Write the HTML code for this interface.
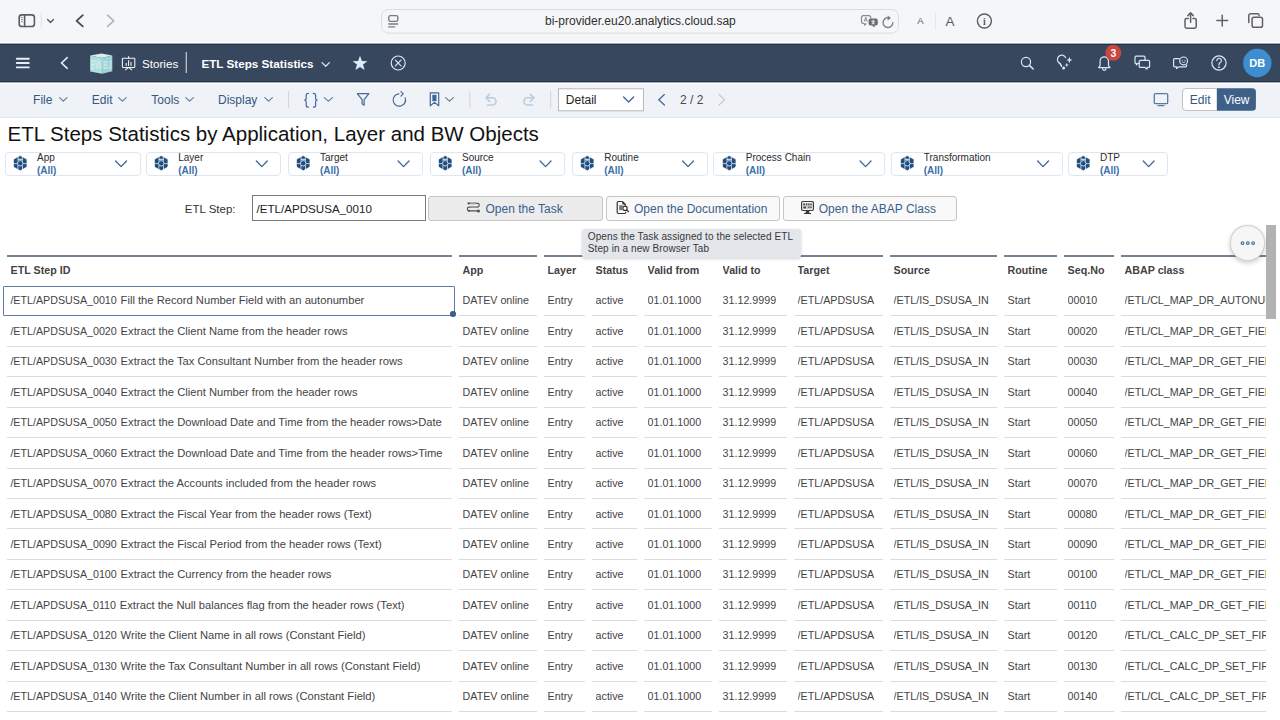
<!DOCTYPE html>
<html><head><meta charset="utf-8">
<style>
*{box-sizing:border-box;margin:0;padding:0}
html,body{width:1280px;height:720px;overflow:hidden;background:#fff;font-family:"Liberation Sans",sans-serif;position:relative}
.a{position:absolute}
.t{position:absolute;line-height:1;white-space:nowrap}
svg{position:absolute;overflow:visible}
/* table */
.hl{position:absolute;top:255.1px;height:1.6px;background:#748293}
.ht{position:absolute;top:264.9px;font-size:10.7px;line-height:1;font-weight:bold;color:#424242;white-space:nowrap;overflow:hidden}
.rl{position:absolute;height:1px;background:#dcdcdc}
.rt{position:absolute;font-size:10.7px;line-height:21px;height:21px;color:#444;white-space:nowrap;overflow:hidden}
.fb{position:absolute;top:152px;height:23.6px;border:1px solid #dde7f2;border-radius:4px;background:#fff}
.fl{position:absolute;top:0.2px;left:31.5px;font-size:10px;line-height:1;color:#2b2b2b;white-space:nowrap}
.fv{position:absolute;top:13.3px;left:31.5px;font-size:10px;line-height:1;font-weight:bold;color:#3c6ea8;white-space:nowrap}
.btn{position:absolute;top:195.5px;height:25.5px;width:174px;border:1px solid #c6c6c6;border-radius:3px;background:#f9f9f9}
.bt{position:absolute;top:6.1px;font-size:12px;line-height:1;color:#3a5f8c;white-space:nowrap}
</style></head><body>

<!-- browser chrome -->
<div class="a" style="left:0;top:0;width:1280px;height:42px;background:#f5f6f8"></div>
<div class="a" style="left:0;top:42px;width:1280px;height:1px;background:#fcfcfd"></div>
<div class="a" style="left:0;top:43px;width:1280px;height:1px;background:#a3aab4"></div>
<div class="a" style="left:0;top:44px;width:1280px;height:1px;background:#233249"></div>

<svg style="left:0;top:0" width="1280" height="42">
 <g fill="none" stroke="#5c5c5e" stroke-width="1.6" stroke-linecap="round" stroke-linejoin="round">
  <rect x="19.2" y="14.9" width="15.2" height="11.6" rx="2.6"/>
  <line x1="24.6" y1="15" x2="24.6" y2="26.4"/>
  <line x1="21.2" y1="17.5" x2="22.6" y2="17.5" stroke-width="0.9" stroke-linecap="butt"/>
  <line x1="21.2" y1="19.6" x2="22.6" y2="19.6" stroke-width="0.9" stroke-linecap="butt"/>
  <line x1="21.2" y1="21.7" x2="22.6" y2="21.7" stroke-width="0.9" stroke-linecap="butt"/>
  <polyline points="47.6,19.6 50.5,22.5 53.4,19.6" stroke-width="1.4"/>
  <polyline points="82.8,15.2 76.6,20.8 82.8,26.4" stroke-width="1.8" stroke="#4a4a4c"/>
  <polyline points="107.6,15.2 113.8,20.8 107.6,26.4" stroke-width="1.6" stroke="#b4b4b6"/>
 </g>
 <line x1="41.3" y1="13" x2="41.3" y2="29" stroke="#e3e3e6" stroke-width="1"/>
 <rect x="381.5" y="9.5" width="517" height="23.6" rx="7" fill="#f5f6f8" stroke="#dcdcdf" stroke-width="1"/>
 <g fill="none" stroke="#7a7a7c" stroke-width="1.4" stroke-linecap="round">
  <rect x="388.8" y="15.6" width="9" height="5.8" rx="1.6"/>
  <line x1="388.8" y1="24" x2="397.6" y2="24"/>
  <line x1="388.8" y1="26.9" x2="394.6" y2="26.9"/>
 </g>
 <!-- translate -->
 <path d="M863.4 15.7 h5.4 a1.9 1.9 0 0 1 1.9 1.9 v0.9 M864.4 23.5 h-1 a1.9 1.9 0 0 1 -1.9 -1.9 v-4 a1.9 1.9 0 0 1 1.9 -1.9 M864.4 23.5 l0.2 1.6 l1.8 -1.6" fill="none" stroke="#8a8a8c" stroke-width="1.2" stroke-linejoin="round"/>
 <path d="M864.2 21.6 l1.6 -4.4 l1.6 4.4 M864.8 20.2 h2" fill="none" stroke="#8a8a8c" stroke-width="0.9"/>
 <path d="M870.6 18.6 h5.2 a2 2 0 0 1 2 2 v3 a2 2 0 0 1 -2 2 h-1 l-0.6 2 l-2 -2 h-1.6 a2 2 0 0 1 -2 -2 v-3 a2 2 0 0 1 2 -2z" fill="#6a6a6c"/>
 <path d="M873.2 19.8 v4.8 M871.2 21.2 h4 M871.8 24.2 l1.4 -2 l1.4 2" fill="none" stroke="#e8e8ea" stroke-width="1"/>
 <path d="M892.9 22.6 A4.9 4.9 0 1 1 888.2 17.7" fill="none" stroke="#7a7a7c" stroke-width="1.3" stroke-linecap="round"/>
 <polygon points="887.6,15.4 891,18 887.6,20.6" fill="#7a7a7c"/>
 <text x="920.4" y="24" font-size="9.5" fill="#5a5a5c" text-anchor="middle" font-family="Liberation Sans">A</text>
 <line x1="935.6" y1="13" x2="935.6" y2="30" stroke="#e4e4e7" stroke-width="1"/>
 <text x="949.9" y="25.9" font-size="13.5" fill="#5a5a5c" text-anchor="middle" font-family="Liberation Sans">A</text>
 <circle cx="984.4" cy="21" r="7" fill="none" stroke="#5c5c5e" stroke-width="1.4"/>
 <text x="984.4" y="25.2" font-size="10" font-weight="bold" fill="#5c5c5e" text-anchor="middle" font-family="Liberation Serif">i</text>
 <g fill="none" stroke="#616163" stroke-width="1.5" stroke-linecap="round" stroke-linejoin="round">
  <path d="M1188.2 18.4 h-1.6 a1.6 1.6 0 0 0 -1.6 1.6 v6.6 a1.6 1.6 0 0 0 1.6 1.6 h8 a1.6 1.6 0 0 0 1.6 -1.6 v-6.6 a1.6 1.6 0 0 0 -1.6 -1.6 h-1.6"/>
  <line x1="1190.6" y1="13.2" x2="1190.6" y2="22.2"/>
  <polyline points="1187.9,15.6 1190.6,12.9 1193.3,15.6"/>
  <line x1="1216.9" y1="20.6" x2="1227.6" y2="20.6"/>
  <line x1="1222.25" y1="15.3" x2="1222.25" y2="26"/>
  <path d="M1248.8 22.6 v-7 a1.8 1.8 0 0 1 1.8 -1.8 h6.8 a1.8 1.8 0 0 1 1.8 1.6"/>
  <rect x="1252.1" y="17.3" width="10.4" height="10" rx="1.8"/>
 </g>
</svg>
<div class="t" style="left:545px;top:15.3px;font-size:12px;color:#2f2f31">bi-provider.eu20.analytics.cloud.sap</div>

<!-- shell bar -->
<div class="a" style="left:0;top:45px;width:1280px;height:36px;background:#37475e"></div>
<div class="a" style="left:0;top:81px;width:1280px;height:1px;background:#28364d"></div>
<div class="a" style="left:0;top:82px;width:1280px;height:1px;background:#a4abb6"></div>
<div class="a" style="left:0;top:83px;width:1280px;height:1px;background:#ffffff"></div>

<svg style="left:0;top:44px" width="1280" height="38">
 <g stroke="#e4eef8" stroke-width="1.9" stroke-linecap="round" fill="none">
  <line x1="16.8" y1="14.75" x2="28.8" y2="14.75"/>
  <line x1="16.8" y1="19" x2="28.8" y2="19"/>
  <line x1="16.8" y1="23.4" x2="28.8" y2="23.4"/>
  <polyline points="67.2,13.7 61.6,19 67.2,24.3" stroke-width="1.6"/>
 </g>
 <!-- cube -->
 <polygon points="90.2,11.6 101.5,9.6 112.3,11.6 101.8,14" fill="#d6eef0"/>
 <polygon points="90.2,11.6 101.8,14 102.2,29.8 90.2,27.4" fill="#a9e1df"/>
 <polygon points="101.8,14 112.3,11.6 112.3,27.2 102.2,29.8" fill="#9dd5da"/>
 <text x="0" y="0" font-size="13" fill="#f3ecf1" text-anchor="middle" font-family="Liberation Sans" opacity="0.85" transform="translate(95.8 25.2) scale(0.5 1)">BW</text>
 <text x="0" y="0" font-size="12.5" fill="#f3ecf1" text-anchor="middle" font-family="Liberation Serif" opacity="0.85" transform="translate(107.3 24.8) scale(0.55 1)">B.I</text>
 <!-- presentation -->
 <g stroke="#f2f5f8" stroke-width="1.05" fill="none" stroke-linecap="round">
  <rect x="122.4" y="14.2" width="12.4" height="9.2" rx="0.6"/>
  <line x1="128.6" y1="12.4" x2="128.6" y2="14.2"/>
  <line x1="126.2" y1="19.4" x2="126.2" y2="21.4"/>
  <line x1="128.6" y1="16.6" x2="128.6" y2="21.4"/>
  <line x1="131" y1="18.4" x2="131" y2="21.4"/>
  <polyline points="125.4,25.8 128.6,23.4 131.8,25.8"/>
 </g>
 <line x1="186.3" y1="8" x2="186.3" y2="29" stroke="#c7cdd6" stroke-width="1.2"/>
 <polyline points="322,18.6 325.7,22.2 329.4,18.6" fill="none" stroke="#d8e6f4" stroke-width="1.3" stroke-linecap="round" stroke-linejoin="round"/>
 <polygon points="360,11.8 361.9,17.1 367.4,17.2 363,20.6 364.6,26.1 360,22.9 355.4,26.1 357,20.6 352.6,17.2 358.1,17.1" fill="#dcebfa"/>
 <circle cx="398.2" cy="19" r="7" fill="none" stroke="#dfe9f5" stroke-width="1.2"/>
 <g stroke="#dfe9f5" stroke-width="1.2" stroke-linecap="round"><line x1="395.4" y1="16.2" x2="401" y2="21.8"/><line x1="401" y1="16.2" x2="395.4" y2="21.8"/></g>
 <!-- right icons -->
 <g fill="none" stroke="#dce7f3" stroke-width="1.2" stroke-linecap="round" stroke-linejoin="round">
  <circle cx="1026" cy="18" r="4.6"/>
  <line x1="1029.4" y1="21.4" x2="1033.2" y2="25" stroke-width="1.6"/>
  <!-- bulb -->
  <path d="M1065.6 13.6 a4.3 4.3 0 1 0 -5.6 5.8 l1.6 2.6 M1064 15.2"/>
  <path d="M1060 19.4 l1.4 2.8"/>
  <!-- bell -->
  <path d="M1098.6 23.6 h11.4 l-1.5 -2 v-4.6 a4.2 4.2 0 0 0 -8.4 0 v4.6z"/>
  <path d="M1102.6 24.6 a1.7 1.7 0 0 0 3.4 0"/>
  <!-- chat -->
  <path d="M1136 12.2 h8 a1 1 0 0 1 1 1 v3 M1139.2 19.4 h-1.2 l-1.6 1.4 v-1.4 h-0.4 a1 1 0 0 1 -1 -1 v-5.2 a1 1 0 0 1 1 -1"/>
  <path d="M1140.2 16.4 h8.4 a1 1 0 0 1 1 1 v5 a1 1 0 0 1 -1 1 h-1.6 l0 1.8 l-2.2 -1.8 h-4.6 a1 1 0 0 1 -1 -1 v-5 a1 1 0 0 1 1 -1z"/>
  <!-- feedback -->
  <path d="M1179.2 14.6 h-4.6 a1 1 0 0 0 -1 1 v6.2 a1 1 0 0 0 1 1 h2 v1.8 l2.2 -1.8 h6.8 a1 1 0 0 0 1 -1 v-1"/>
  <circle cx="1183.6" cy="16.9" r="3.9"/>
  <circle cx="1219" cy="19" r="7.1"/>
  <path d="M1216.8 16.6 a2.3 2.3 0 1 1 3.2 2.1 q-1 0.5 -1 1.6 v0.6"/>
 </g>
 <g fill="#dce7f3">
  <polygon points="1069.4,12.8 1070.3,15.2 1072.6,16 1070.3,16.8 1069.4,19.2 1068.5,16.8 1066.2,16 1068.5,15.2"/>
  <polygon points="1066.8,18.8 1067.4,20.4 1069,21 1067.4,21.6 1066.8,23.2 1066.2,21.6 1064.6,21 1066.2,20.4"/>
  <circle cx="1063.6" cy="24" r="1.5"/>
  <circle cx="1219" cy="23.2" r="0.9"/>
  <circle cx="1182.3" cy="16.2" r="0.55"/><circle cx="1184.9" cy="16.2" r="0.55"/>
 </g>
 <path d="M1181.9 17.8 q1.7 1.5 3.4 0" fill="none" stroke="#dce7f3" stroke-width="0.8"/>
 <circle cx="1113.3" cy="8.8" r="8" fill="#c9473f"/>
 <text x="1113.3" y="12.5" font-size="10.5" font-weight="bold" fill="#fff" text-anchor="middle" font-family="Liberation Sans">3</text>
 <circle cx="1257.3" cy="19" r="14.2" fill="#3e8dd0"/>
 <text x="1257.3" y="23" font-size="11" font-weight="bold" fill="#fff" text-anchor="middle" font-family="Liberation Sans">DB</text>
</svg>
<div class="t" style="left:141.9px;top:58px;font-size:11.7px;color:#fff">Stories</div>
<div class="t" style="left:201.4px;top:58px;font-size:11.7px;font-weight:bold;color:#fff">ETL Steps Statistics</div>

<!-- toolbar -->
<div class="a" style="left:0;top:84px;width:1280px;height:33px;background:#eff2f7"></div>
<div class="a" style="left:0;top:117px;width:1280px;height:1px;background:#dfe5f1"></div>
<div class="t" style="left:33.1px;top:93.9px;font-size:12px;color:#35577f">File</div>
<div class="t" style="left:91.8px;top:93.9px;font-size:12px;color:#35577f">Edit</div>
<div class="t" style="left:151.3px;top:93.9px;font-size:12px;color:#35577f">Tools</div>
<div class="t" style="left:218px;top:93.9px;font-size:12px;color:#35577f">Display</div>
<svg style="left:0;top:84px" width="1280" height="33">
 <g fill="none" stroke="#5d7a9e" stroke-width="1.1" stroke-linecap="round" stroke-linejoin="round">
  <polyline points="59.6,13.6 63.3,17.2 67,13.6"/>
  <polyline points="118.6,13.6 122.4,17.2 126.2,13.6"/>
  <polyline points="185.8,13.6 189.6,17.2 193.4,13.6"/>
  <polyline points="264.8,13.6 268.6,17.2 272.4,13.6"/>
  <polyline points="324.3,13.6 328.4,17.2 332.5,13.6"/>
  <polyline points="445.6,13.6 449.5,17.2 453.4,13.6"/>
 </g>
 <line x1="288.6" y1="7" x2="288.6" y2="24" stroke="#cfd6e0" stroke-width="1"/>
 <line x1="469.8" y1="7" x2="469.8" y2="24" stroke="#cfd6e0" stroke-width="1"/>
 <line x1="550.7" y1="7" x2="550.7" y2="24" stroke="#cfd6e0" stroke-width="1"/>
 <g fill="none" stroke="#46699a" stroke-width="1.2" stroke-linecap="round" stroke-linejoin="round">
  <path d="M308.4 9.4 q-2.2 0 -2.2 2 v3 q0 1.6 -1.6 1.8 q1.6 0.2 1.6 1.8 v3.2 q0 2 2.2 2"/>
  <path d="M313.4 9.4 q2.2 0 2.2 2 v3 q0 1.6 1.6 1.8 q-1.6 0.2 -1.6 1.8 v3.2 q0 2 -2.2 2"/>
  <path d="M357.3 9.6 h11.6 l-4.8 6 v5.6 l-2 -1.4 v-4.2z"/>
  <path d="M405.2 13.9 A6.2 6.2 0 1 1 398.9 9.8"/>
  <polyline points="400.9,7.6 403.2,9.9 400.9,12.2"/>
  <path d="M430.3 8.8 h8.4 v13 l-4.2 -3.4 l-4.2 3.4z"/>
 </g>
 <rect x="432.3" y="10.8" width="4.2" height="6.4" fill="#3d6796"/>
 <g fill="none" stroke="#bccbdb" stroke-width="1.6" stroke-linecap="round" stroke-linejoin="round">
  <path d="M486.2 13.8 h6.2 a3.6 3.6 0 0 1 0 7.2 h-5"/>
  <polyline points="489.6,10.2 486,13.8 489.6,17.4"/>
  <path d="M533.8 13.8 h-6.2 a3.6 3.6 0 0 0 0 7.2 h5"/>
  <polyline points="530.4,10.2 534,13.8 530.4,17.4"/>
 </g>
 <rect x="558.5" y="4.8" width="85" height="22" fill="#fff" stroke="#b8b8b8" stroke-width="1"/>
 <polyline points="623.6,13 628.6,18 633.6,13" fill="none" stroke="#3f6a9c" stroke-width="1.4" stroke-linecap="round" stroke-linejoin="round"/>
 <polyline points="664.4,10.6 658.8,15.8 664.4,21" fill="none" stroke="#46699a" stroke-width="1.3" stroke-linecap="round" stroke-linejoin="round"/>
 <polyline points="719,10.6 724.6,15.8 719,21" fill="none" stroke="#c3ccd8" stroke-width="1.3" stroke-linecap="round" stroke-linejoin="round"/>
 <g fill="none" stroke="#5b7ba0" stroke-width="1.3">
  <rect x="1154.3" y="9.6" width="13.4" height="10" rx="1.2"/>
  <line x1="1157.5" y1="21.6" x2="1164.5" y2="21.6"/>
 </g>
 <path d="M1186 4.5 h31 v22 h-31 a3.5 3.5 0 0 1 -3.5 -3.5 v-15 a3.5 3.5 0 0 1 3.5 -3.5z" fill="#fff" stroke="#c2c2c2" stroke-width="1"/>
 <path d="M1217 4.2 h35.3 a3.6 3.6 0 0 1 3.6 3.6 v15.4 a3.6 3.6 0 0 1 -3.6 3.6 h-35.3z" fill="#3d5f88"/>
</svg>
<div class="t" style="left:565.8px;top:93.9px;font-size:12px;color:#232323">Detail</div>
<div class="t" style="left:680px;top:93.9px;font-size:12px;color:#484848">2 / 2</div>
<div class="t" style="left:1189.8px;top:93.9px;font-size:12px;color:#35577f">Edit</div>
<div class="t" style="left:1223.7px;top:93.9px;font-size:12px;color:#fff">View</div>

<!-- title -->
<div class="t" style="left:7.5px;top:124.2px;font-size:20.5px;color:#111">ETL Steps Statistics by Application, Layer and BW Objects</div>

<!-- filters -->
<div class="fb" style="left:4.5px;width:136px"><div class="fl">App</div><div class="fv">(All)</div></div>
<svg style="left:13.9px;top:156px" width="12.4" height="14.25" viewBox="0 0 12.4 14.25"><polygon points="6.2,0 12.4,3.56 12.4,10.69 6.2,14.25 0,10.69 0,3.56" fill="#214e80" stroke="#214e80" stroke-width="0.4" stroke-linejoin="round"/><g stroke="#fff" fill="none" opacity="0.85"><circle cx="6.2" cy="7.3" r="2.75" stroke-width="0.9"/><line x1="4.0" y1="0" x2="4.0" y2="5" stroke-width="0.8"/><line x1="8.4" y1="0" x2="8.4" y2="5" stroke-width="0.8"/><line x1="4.0" y1="3.3" x2="8.4" y2="3.3" stroke-width="1.1"/><line x1="3.9" y1="9.4" x2="3.9" y2="14.3" stroke-width="0.8"/><line x1="8.5" y1="9.4" x2="8.5" y2="14.3" stroke-width="0.8"/><line x1="-0.5" y1="7.6" x2="3.4" y2="7.6" stroke-width="0.8"/><line x1="9" y1="7.6" x2="12.9" y2="7.6" stroke-width="0.8"/></g></svg>
<svg style="left:0;top:0" width="1" height="1"><polyline points="115.6,161 121.05,166.6 126.5,161" fill="none" stroke="#3e6595" stroke-width="1.3" stroke-linecap="round" stroke-linejoin="round"/></svg>
<div class="fb" style="left:145.75px;width:135.5px"><div class="fl">Layer</div><div class="fv">(All)</div></div>
<svg style="left:155.15px;top:156px" width="12.4" height="14.25" viewBox="0 0 12.4 14.25"><polygon points="6.2,0 12.4,3.56 12.4,10.69 6.2,14.25 0,10.69 0,3.56" fill="#214e80" stroke="#214e80" stroke-width="0.4" stroke-linejoin="round"/><g stroke="#fff" fill="none" opacity="0.85"><circle cx="6.2" cy="7.3" r="2.75" stroke-width="0.9"/><line x1="4.0" y1="0" x2="4.0" y2="5" stroke-width="0.8"/><line x1="8.4" y1="0" x2="8.4" y2="5" stroke-width="0.8"/><line x1="4.0" y1="3.3" x2="8.4" y2="3.3" stroke-width="1.1"/><line x1="3.9" y1="9.4" x2="3.9" y2="14.3" stroke-width="0.8"/><line x1="8.5" y1="9.4" x2="8.5" y2="14.3" stroke-width="0.8"/><line x1="-0.5" y1="7.6" x2="3.4" y2="7.6" stroke-width="0.8"/><line x1="9" y1="7.6" x2="12.9" y2="7.6" stroke-width="0.8"/></g></svg>
<svg style="left:0;top:0" width="1" height="1"><polyline points="256.35,161 261.8,166.6 267.25,161" fill="none" stroke="#3e6595" stroke-width="1.3" stroke-linecap="round" stroke-linejoin="round"/></svg>
<div class="fb" style="left:287.5px;width:135.5px"><div class="fl">Target</div><div class="fv">(All)</div></div>
<svg style="left:296.9px;top:156px" width="12.4" height="14.25" viewBox="0 0 12.4 14.25"><polygon points="6.2,0 12.4,3.56 12.4,10.69 6.2,14.25 0,10.69 0,3.56" fill="#214e80" stroke="#214e80" stroke-width="0.4" stroke-linejoin="round"/><g stroke="#fff" fill="none" opacity="0.85"><circle cx="6.2" cy="7.3" r="2.75" stroke-width="0.9"/><line x1="4.0" y1="0" x2="4.0" y2="5" stroke-width="0.8"/><line x1="8.4" y1="0" x2="8.4" y2="5" stroke-width="0.8"/><line x1="4.0" y1="3.3" x2="8.4" y2="3.3" stroke-width="1.1"/><line x1="3.9" y1="9.4" x2="3.9" y2="14.3" stroke-width="0.8"/><line x1="8.5" y1="9.4" x2="8.5" y2="14.3" stroke-width="0.8"/><line x1="-0.5" y1="7.6" x2="3.4" y2="7.6" stroke-width="0.8"/><line x1="9" y1="7.6" x2="12.9" y2="7.6" stroke-width="0.8"/></g></svg>
<svg style="left:0;top:0" width="1" height="1"><polyline points="398.1,161 403.55,166.6 409.0,161" fill="none" stroke="#3e6595" stroke-width="1.3" stroke-linecap="round" stroke-linejoin="round"/></svg>
<div class="fb" style="left:429.5px;width:135.5px"><div class="fl">Source</div><div class="fv">(All)</div></div>
<svg style="left:438.9px;top:156px" width="12.4" height="14.25" viewBox="0 0 12.4 14.25"><polygon points="6.2,0 12.4,3.56 12.4,10.69 6.2,14.25 0,10.69 0,3.56" fill="#214e80" stroke="#214e80" stroke-width="0.4" stroke-linejoin="round"/><g stroke="#fff" fill="none" opacity="0.85"><circle cx="6.2" cy="7.3" r="2.75" stroke-width="0.9"/><line x1="4.0" y1="0" x2="4.0" y2="5" stroke-width="0.8"/><line x1="8.4" y1="0" x2="8.4" y2="5" stroke-width="0.8"/><line x1="4.0" y1="3.3" x2="8.4" y2="3.3" stroke-width="1.1"/><line x1="3.9" y1="9.4" x2="3.9" y2="14.3" stroke-width="0.8"/><line x1="8.5" y1="9.4" x2="8.5" y2="14.3" stroke-width="0.8"/><line x1="-0.5" y1="7.6" x2="3.4" y2="7.6" stroke-width="0.8"/><line x1="9" y1="7.6" x2="12.9" y2="7.6" stroke-width="0.8"/></g></svg>
<svg style="left:0;top:0" width="1" height="1"><polyline points="540.1,161 545.55,166.6 551.0,161" fill="none" stroke="#3e6595" stroke-width="1.3" stroke-linecap="round" stroke-linejoin="round"/></svg>
<div class="fb" style="left:571.75px;width:135.75px"><div class="fl">Routine</div><div class="fv">(All)</div></div>
<svg style="left:581.15px;top:156px" width="12.4" height="14.25" viewBox="0 0 12.4 14.25"><polygon points="6.2,0 12.4,3.56 12.4,10.69 6.2,14.25 0,10.69 0,3.56" fill="#214e80" stroke="#214e80" stroke-width="0.4" stroke-linejoin="round"/><g stroke="#fff" fill="none" opacity="0.85"><circle cx="6.2" cy="7.3" r="2.75" stroke-width="0.9"/><line x1="4.0" y1="0" x2="4.0" y2="5" stroke-width="0.8"/><line x1="8.4" y1="0" x2="8.4" y2="5" stroke-width="0.8"/><line x1="4.0" y1="3.3" x2="8.4" y2="3.3" stroke-width="1.1"/><line x1="3.9" y1="9.4" x2="3.9" y2="14.3" stroke-width="0.8"/><line x1="8.5" y1="9.4" x2="8.5" y2="14.3" stroke-width="0.8"/><line x1="-0.5" y1="7.6" x2="3.4" y2="7.6" stroke-width="0.8"/><line x1="9" y1="7.6" x2="12.9" y2="7.6" stroke-width="0.8"/></g></svg>
<svg style="left:0;top:0" width="1" height="1"><polyline points="682.6,161 688.05,166.6 693.5,161" fill="none" stroke="#3e6595" stroke-width="1.3" stroke-linecap="round" stroke-linejoin="round"/></svg>
<div class="fb" style="left:713.25px;width:171.75px"><div class="fl">Process Chain</div><div class="fv">(All)</div></div>
<svg style="left:722.65px;top:156px" width="12.4" height="14.25" viewBox="0 0 12.4 14.25"><polygon points="6.2,0 12.4,3.56 12.4,10.69 6.2,14.25 0,10.69 0,3.56" fill="#214e80" stroke="#214e80" stroke-width="0.4" stroke-linejoin="round"/><g stroke="#fff" fill="none" opacity="0.85"><circle cx="6.2" cy="7.3" r="2.75" stroke-width="0.9"/><line x1="4.0" y1="0" x2="4.0" y2="5" stroke-width="0.8"/><line x1="8.4" y1="0" x2="8.4" y2="5" stroke-width="0.8"/><line x1="4.0" y1="3.3" x2="8.4" y2="3.3" stroke-width="1.1"/><line x1="3.9" y1="9.4" x2="3.9" y2="14.3" stroke-width="0.8"/><line x1="8.5" y1="9.4" x2="8.5" y2="14.3" stroke-width="0.8"/><line x1="-0.5" y1="7.6" x2="3.4" y2="7.6" stroke-width="0.8"/><line x1="9" y1="7.6" x2="12.9" y2="7.6" stroke-width="0.8"/></g></svg>
<svg style="left:0;top:0" width="1" height="1"><polyline points="860.1,161 865.55,166.6 871.0,161" fill="none" stroke="#3e6595" stroke-width="1.3" stroke-linecap="round" stroke-linejoin="round"/></svg>
<div class="fb" style="left:891.25px;width:171.25px"><div class="fl">Transformation</div><div class="fv">(All)</div></div>
<svg style="left:900.65px;top:156px" width="12.4" height="14.25" viewBox="0 0 12.4 14.25"><polygon points="6.2,0 12.4,3.56 12.4,10.69 6.2,14.25 0,10.69 0,3.56" fill="#214e80" stroke="#214e80" stroke-width="0.4" stroke-linejoin="round"/><g stroke="#fff" fill="none" opacity="0.85"><circle cx="6.2" cy="7.3" r="2.75" stroke-width="0.9"/><line x1="4.0" y1="0" x2="4.0" y2="5" stroke-width="0.8"/><line x1="8.4" y1="0" x2="8.4" y2="5" stroke-width="0.8"/><line x1="4.0" y1="3.3" x2="8.4" y2="3.3" stroke-width="1.1"/><line x1="3.9" y1="9.4" x2="3.9" y2="14.3" stroke-width="0.8"/><line x1="8.5" y1="9.4" x2="8.5" y2="14.3" stroke-width="0.8"/><line x1="-0.5" y1="7.6" x2="3.4" y2="7.6" stroke-width="0.8"/><line x1="9" y1="7.6" x2="12.9" y2="7.6" stroke-width="0.8"/></g></svg>
<svg style="left:0;top:0" width="1" height="1"><polyline points="1037.6,161 1043.05,166.6 1048.5,161" fill="none" stroke="#3e6595" stroke-width="1.3" stroke-linecap="round" stroke-linejoin="round"/></svg>
<div class="fb" style="left:1067.5px;width:100.6px"><div class="fl">DTP</div><div class="fv">(All)</div></div>
<svg style="left:1076.9px;top:156px" width="12.4" height="14.25" viewBox="0 0 12.4 14.25"><polygon points="6.2,0 12.4,3.56 12.4,10.69 6.2,14.25 0,10.69 0,3.56" fill="#214e80" stroke="#214e80" stroke-width="0.4" stroke-linejoin="round"/><g stroke="#fff" fill="none" opacity="0.85"><circle cx="6.2" cy="7.3" r="2.75" stroke-width="0.9"/><line x1="4.0" y1="0" x2="4.0" y2="5" stroke-width="0.8"/><line x1="8.4" y1="0" x2="8.4" y2="5" stroke-width="0.8"/><line x1="4.0" y1="3.3" x2="8.4" y2="3.3" stroke-width="1.1"/><line x1="3.9" y1="9.4" x2="3.9" y2="14.3" stroke-width="0.8"/><line x1="8.5" y1="9.4" x2="8.5" y2="14.3" stroke-width="0.8"/><line x1="-0.5" y1="7.6" x2="3.4" y2="7.6" stroke-width="0.8"/><line x1="9" y1="7.6" x2="12.9" y2="7.6" stroke-width="0.8"/></g></svg>
<svg style="left:0;top:0" width="1" height="1"><polyline points="1143.1999999999998,161 1148.6499999999999,166.6 1154.1,161" fill="none" stroke="#3e6595" stroke-width="1.3" stroke-linecap="round" stroke-linejoin="round"/></svg>

<!-- ETL step row -->
<div class="t" style="left:184.8px;top:203.5px;font-size:11.5px;color:#333">ETL Step:</div>
<div class="a" style="left:251.8px;top:195.3px;width:174px;height:26px;border:1.3px solid #7a7a7a;background:#fff"></div>
<div class="t" style="left:256.5px;top:203.4px;font-size:11.6px;color:#222">/ETL/APDSUSA_0010</div>
<div class="btn" style="left:428.3px;width:174.4px;background:#ececec"><div class="bt" style="left:56.2px">Open the Task</div></div>
<div class="btn" style="left:606px"><div class="bt" style="left:27px">Open the Documentation</div></div>
<div class="btn" style="left:783.1px"><div class="bt" style="left:34.7px">Open the ABAP Class</div></div>
<svg style="left:0;top:190px" width="1280" height="40">
 <!-- task icon -->
 <g fill="none" stroke="#505050" stroke-width="1.15" stroke-linecap="round">
  <path d="M468.6 13.4 H477.4 a1.85 1.85 0 0 1 0 3.7 H469.2 a1.85 1.85 0 0 0 0 3.7 H477.6"/>
  <line x1="471" y1="17.1" x2="476" y2="17.1" stroke="#999" stroke-width="1.6"/>
  <line x1="471" y1="13.4" x2="475.6" y2="13.4" stroke="#999" stroke-width="1.6"/>
 </g>
 <circle cx="468.6" cy="13.4" r="1.1" fill="#505050"/>
 <circle cx="469" cy="20.8" r="1.1" fill="#505050"/>
 <circle cx="478.4" cy="21" r="1.6" fill="#555"/>
 <!-- doc icon -->
 <g fill="none" stroke="#333" stroke-width="1.2" stroke-linejoin="round">
  <path d="M622.4 11.5 h-4 a1.2 1.2 0 0 0 -1.2 1.2 v9.6 a1.2 1.2 0 0 0 1.2 1.2 h6.2 a1.2 1.2 0 0 0 1.2 -1.2 v-0.6"/>
  <path d="M622.4 11.5 l3 3 v1.2"/>
  <circle cx="625" cy="18.3" r="2.2"/>
  <line x1="626.6" y1="19.9" x2="628.4" y2="21.6" stroke-width="1.4" stroke-linecap="round"/>
 </g>
 <path d="M622.4 11.5 l3 3 h-3z" fill="#333"/>
 <rect x="619.2" y="15.2" width="3.4" height="5" fill="#777"/>
 <!-- abap icon -->
 <g>
  <rect x="801.6" y="11.5" width="11.8" height="9" rx="1.2" fill="none" stroke="#3a3a3a" stroke-width="1.2"/>
  <rect x="803" y="12.9" width="9" height="6.2" fill="#c8c8c8"/>
  <g fill="#404040">
   <rect x="803.4" y="13.6" width="1.6" height="1.6"/><rect x="806" y="13.6" width="1.2" height="1.6"/><rect x="808.2" y="13.6" width="1.2" height="1.6"/><rect x="810.4" y="13.6" width="1.2" height="1.6"/>
   <rect x="803.4" y="16.6" width="2.6" height="1.8"/><rect x="808.2" y="16.6" width="1.4" height="1.2"/><rect x="810.2" y="16.6" width="1.4" height="1.2"/>
  </g>
  <path d="M806.2 20.5 h2.6 l0.8 2.6 h1.4 v0.8 h-7 v-0.8 h1.4z" fill="#3a3a3a"/>
 </g>
</svg>

<!-- table -->
<div class="hl" style="left:7px;width:445px"></div>
<div class="ht" style="left:10.6px;width:441.4px">ETL Step ID</div>
<div class="hl" style="left:459px;width:78px"></div>
<div class="ht" style="left:462.6px;width:74.4px">App</div>
<div class="hl" style="left:544px;width:41px"></div>
<div class="ht" style="left:547.6px;width:37.4px">Layer</div>
<div class="hl" style="left:592px;width:45px"></div>
<div class="ht" style="left:595.6px;width:41.4px">Status</div>
<div class="hl" style="left:644px;width:68px"></div>
<div class="ht" style="left:647.6px;width:64.4px">Valid from</div>
<div class="hl" style="left:719px;width:68px"></div>
<div class="ht" style="left:722.6px;width:64.4px">Valid to</div>
<div class="hl" style="left:794px;width:89px"></div>
<div class="ht" style="left:797.6px;width:85.4px">Target</div>
<div class="hl" style="left:890px;width:107px"></div>
<div class="ht" style="left:893.6px;width:103.4px">Source</div>
<div class="hl" style="left:1004px;width:53px"></div>
<div class="ht" style="left:1007.6px;width:49.4px">Routine</div>
<div class="hl" style="left:1064px;width:50px"></div>
<div class="ht" style="left:1067.6px;width:46.4px">Seq.No</div>
<div class="hl" style="left:1121px;width:145px"></div>
<div class="ht" style="left:1124.6px;width:141.4px">ABAP class</div>
<div class="rl" style="left:7px;top:315px;width:445px"></div>
<div class="rt" style="left:10.4px;top:290.39px;width:441.4px;font-size:10.7px">/ETL/APDSUSA_0010 <span style="font-size:11.2px;margin-left:0.9px">Fill the Record Number Field with an autonumber</span></div>
<div class="rl" style="left:459px;top:315px;width:78px"></div>
<div class="rt" style="left:462.6px;top:290.39px;width:74.4px;font-size:10.7px">DATEV online</div>
<div class="rl" style="left:544px;top:315px;width:41px"></div>
<div class="rt" style="left:547.6px;top:290.39px;width:37.4px;font-size:10.7px">Entry</div>
<div class="rl" style="left:592px;top:315px;width:45px"></div>
<div class="rt" style="left:595.6px;top:290.39px;width:41.4px;font-size:10.7px">active</div>
<div class="rl" style="left:644px;top:315px;width:68px"></div>
<div class="rt" style="left:647.6px;top:290.39px;width:64.4px;font-size:10.7px">01.01.1000</div>
<div class="rl" style="left:719px;top:315px;width:68px"></div>
<div class="rt" style="left:722.6px;top:290.39px;width:64.4px;font-size:10.7px">31.12.9999</div>
<div class="rl" style="left:794px;top:315px;width:89px"></div>
<div class="rt" style="left:797.6px;top:290.39px;width:85.4px;font-size:10.7px">/ETL/APDSUSA</div>
<div class="rl" style="left:890px;top:315px;width:107px"></div>
<div class="rt" style="left:893.6px;top:290.39px;width:103.4px;font-size:10.7px">/ETL/IS_DSUSA_IN</div>
<div class="rl" style="left:1004px;top:315px;width:53px"></div>
<div class="rt" style="left:1007.6px;top:290.39px;width:49.4px;font-size:10.7px">Start</div>
<div class="rl" style="left:1064px;top:315px;width:50px"></div>
<div class="rt" style="left:1067.6px;top:290.39px;width:46.4px;font-size:10.7px">00010</div>
<div class="rl" style="left:1121px;top:315px;width:145px"></div>
<div class="rt" style="left:1124.6px;top:290.39px;width:141.4px;font-size:10.7px">/ETL/CL_MAP_DR_AUTONUMBER</div>
<div class="rl" style="left:7px;top:346px;width:445px"></div>
<div class="rt" style="left:10.4px;top:320.84px;width:441.4px;font-size:10.7px">/ETL/APDSUSA_0020 <span style="font-size:11.2px;margin-left:0.9px">Extract the Client Name from the header rows</span></div>
<div class="rl" style="left:459px;top:346px;width:78px"></div>
<div class="rt" style="left:462.6px;top:320.84px;width:74.4px;font-size:10.7px">DATEV online</div>
<div class="rl" style="left:544px;top:346px;width:41px"></div>
<div class="rt" style="left:547.6px;top:320.84px;width:37.4px;font-size:10.7px">Entry</div>
<div class="rl" style="left:592px;top:346px;width:45px"></div>
<div class="rt" style="left:595.6px;top:320.84px;width:41.4px;font-size:10.7px">active</div>
<div class="rl" style="left:644px;top:346px;width:68px"></div>
<div class="rt" style="left:647.6px;top:320.84px;width:64.4px;font-size:10.7px">01.01.1000</div>
<div class="rl" style="left:719px;top:346px;width:68px"></div>
<div class="rt" style="left:722.6px;top:320.84px;width:64.4px;font-size:10.7px">31.12.9999</div>
<div class="rl" style="left:794px;top:346px;width:89px"></div>
<div class="rt" style="left:797.6px;top:320.84px;width:85.4px;font-size:10.7px">/ETL/APDSUSA</div>
<div class="rl" style="left:890px;top:346px;width:107px"></div>
<div class="rt" style="left:893.6px;top:320.84px;width:103.4px;font-size:10.7px">/ETL/IS_DSUSA_IN</div>
<div class="rl" style="left:1004px;top:346px;width:53px"></div>
<div class="rt" style="left:1007.6px;top:320.84px;width:49.4px;font-size:10.7px">Start</div>
<div class="rl" style="left:1064px;top:346px;width:50px"></div>
<div class="rt" style="left:1067.6px;top:320.84px;width:46.4px;font-size:10.7px">00020</div>
<div class="rl" style="left:1121px;top:346px;width:145px"></div>
<div class="rt" style="left:1124.6px;top:320.84px;width:141.4px;font-size:10.7px">/ETL/CL_MAP_DR_GET_FIELD</div>
<div class="rl" style="left:7px;top:376px;width:445px"></div>
<div class="rt" style="left:10.4px;top:351.29px;width:441.4px;font-size:10.7px">/ETL/APDSUSA_0030 <span style="font-size:11.2px;margin-left:0.9px">Extract the Tax Consultant Number from the header rows</span></div>
<div class="rl" style="left:459px;top:376px;width:78px"></div>
<div class="rt" style="left:462.6px;top:351.29px;width:74.4px;font-size:10.7px">DATEV online</div>
<div class="rl" style="left:544px;top:376px;width:41px"></div>
<div class="rt" style="left:547.6px;top:351.29px;width:37.4px;font-size:10.7px">Entry</div>
<div class="rl" style="left:592px;top:376px;width:45px"></div>
<div class="rt" style="left:595.6px;top:351.29px;width:41.4px;font-size:10.7px">active</div>
<div class="rl" style="left:644px;top:376px;width:68px"></div>
<div class="rt" style="left:647.6px;top:351.29px;width:64.4px;font-size:10.7px">01.01.1000</div>
<div class="rl" style="left:719px;top:376px;width:68px"></div>
<div class="rt" style="left:722.6px;top:351.29px;width:64.4px;font-size:10.7px">31.12.9999</div>
<div class="rl" style="left:794px;top:376px;width:89px"></div>
<div class="rt" style="left:797.6px;top:351.29px;width:85.4px;font-size:10.7px">/ETL/APDSUSA</div>
<div class="rl" style="left:890px;top:376px;width:107px"></div>
<div class="rt" style="left:893.6px;top:351.29px;width:103.4px;font-size:10.7px">/ETL/IS_DSUSA_IN</div>
<div class="rl" style="left:1004px;top:376px;width:53px"></div>
<div class="rt" style="left:1007.6px;top:351.29px;width:49.4px;font-size:10.7px">Start</div>
<div class="rl" style="left:1064px;top:376px;width:50px"></div>
<div class="rt" style="left:1067.6px;top:351.29px;width:46.4px;font-size:10.7px">00030</div>
<div class="rl" style="left:1121px;top:376px;width:145px"></div>
<div class="rt" style="left:1124.6px;top:351.29px;width:141.4px;font-size:10.7px">/ETL/CL_MAP_DR_GET_FIELD</div>
<div class="rl" style="left:7px;top:407px;width:445px"></div>
<div class="rt" style="left:10.4px;top:381.74px;width:441.4px;font-size:10.7px">/ETL/APDSUSA_0040 <span style="font-size:11.2px;margin-left:0.9px">Extract the Client Number from the header rows</span></div>
<div class="rl" style="left:459px;top:407px;width:78px"></div>
<div class="rt" style="left:462.6px;top:381.74px;width:74.4px;font-size:10.7px">DATEV online</div>
<div class="rl" style="left:544px;top:407px;width:41px"></div>
<div class="rt" style="left:547.6px;top:381.74px;width:37.4px;font-size:10.7px">Entry</div>
<div class="rl" style="left:592px;top:407px;width:45px"></div>
<div class="rt" style="left:595.6px;top:381.74px;width:41.4px;font-size:10.7px">active</div>
<div class="rl" style="left:644px;top:407px;width:68px"></div>
<div class="rt" style="left:647.6px;top:381.74px;width:64.4px;font-size:10.7px">01.01.1000</div>
<div class="rl" style="left:719px;top:407px;width:68px"></div>
<div class="rt" style="left:722.6px;top:381.74px;width:64.4px;font-size:10.7px">31.12.9999</div>
<div class="rl" style="left:794px;top:407px;width:89px"></div>
<div class="rt" style="left:797.6px;top:381.74px;width:85.4px;font-size:10.7px">/ETL/APDSUSA</div>
<div class="rl" style="left:890px;top:407px;width:107px"></div>
<div class="rt" style="left:893.6px;top:381.74px;width:103.4px;font-size:10.7px">/ETL/IS_DSUSA_IN</div>
<div class="rl" style="left:1004px;top:407px;width:53px"></div>
<div class="rt" style="left:1007.6px;top:381.74px;width:49.4px;font-size:10.7px">Start</div>
<div class="rl" style="left:1064px;top:407px;width:50px"></div>
<div class="rt" style="left:1067.6px;top:381.74px;width:46.4px;font-size:10.7px">00040</div>
<div class="rl" style="left:1121px;top:407px;width:145px"></div>
<div class="rt" style="left:1124.6px;top:381.74px;width:141.4px;font-size:10.7px">/ETL/CL_MAP_DR_GET_FIELD</div>
<div class="rl" style="left:7px;top:437px;width:445px"></div>
<div class="rt" style="left:10.4px;top:412.19px;width:441.4px;font-size:10.7px">/ETL/APDSUSA_0050 <span style="font-size:11.2px;margin-left:0.9px">Extract the Download Date and Time from the header rows&gt;Date</span></div>
<div class="rl" style="left:459px;top:437px;width:78px"></div>
<div class="rt" style="left:462.6px;top:412.19px;width:74.4px;font-size:10.7px">DATEV online</div>
<div class="rl" style="left:544px;top:437px;width:41px"></div>
<div class="rt" style="left:547.6px;top:412.19px;width:37.4px;font-size:10.7px">Entry</div>
<div class="rl" style="left:592px;top:437px;width:45px"></div>
<div class="rt" style="left:595.6px;top:412.19px;width:41.4px;font-size:10.7px">active</div>
<div class="rl" style="left:644px;top:437px;width:68px"></div>
<div class="rt" style="left:647.6px;top:412.19px;width:64.4px;font-size:10.7px">01.01.1000</div>
<div class="rl" style="left:719px;top:437px;width:68px"></div>
<div class="rt" style="left:722.6px;top:412.19px;width:64.4px;font-size:10.7px">31.12.9999</div>
<div class="rl" style="left:794px;top:437px;width:89px"></div>
<div class="rt" style="left:797.6px;top:412.19px;width:85.4px;font-size:10.7px">/ETL/APDSUSA</div>
<div class="rl" style="left:890px;top:437px;width:107px"></div>
<div class="rt" style="left:893.6px;top:412.19px;width:103.4px;font-size:10.7px">/ETL/IS_DSUSA_IN</div>
<div class="rl" style="left:1004px;top:437px;width:53px"></div>
<div class="rt" style="left:1007.6px;top:412.19px;width:49.4px;font-size:10.7px">Start</div>
<div class="rl" style="left:1064px;top:437px;width:50px"></div>
<div class="rt" style="left:1067.6px;top:412.19px;width:46.4px;font-size:10.7px">00050</div>
<div class="rl" style="left:1121px;top:437px;width:145px"></div>
<div class="rt" style="left:1124.6px;top:412.19px;width:141.4px;font-size:10.7px">/ETL/CL_MAP_DR_GET_FIELD</div>
<div class="rl" style="left:7px;top:468px;width:445px"></div>
<div class="rt" style="left:10.4px;top:442.64px;width:441.4px;font-size:10.7px">/ETL/APDSUSA_0060 <span style="font-size:11.2px;margin-left:0.9px">Extract the Download Date and Time from the header rows&gt;Time</span></div>
<div class="rl" style="left:459px;top:468px;width:78px"></div>
<div class="rt" style="left:462.6px;top:442.64px;width:74.4px;font-size:10.7px">DATEV online</div>
<div class="rl" style="left:544px;top:468px;width:41px"></div>
<div class="rt" style="left:547.6px;top:442.64px;width:37.4px;font-size:10.7px">Entry</div>
<div class="rl" style="left:592px;top:468px;width:45px"></div>
<div class="rt" style="left:595.6px;top:442.64px;width:41.4px;font-size:10.7px">active</div>
<div class="rl" style="left:644px;top:468px;width:68px"></div>
<div class="rt" style="left:647.6px;top:442.64px;width:64.4px;font-size:10.7px">01.01.1000</div>
<div class="rl" style="left:719px;top:468px;width:68px"></div>
<div class="rt" style="left:722.6px;top:442.64px;width:64.4px;font-size:10.7px">31.12.9999</div>
<div class="rl" style="left:794px;top:468px;width:89px"></div>
<div class="rt" style="left:797.6px;top:442.64px;width:85.4px;font-size:10.7px">/ETL/APDSUSA</div>
<div class="rl" style="left:890px;top:468px;width:107px"></div>
<div class="rt" style="left:893.6px;top:442.64px;width:103.4px;font-size:10.7px">/ETL/IS_DSUSA_IN</div>
<div class="rl" style="left:1004px;top:468px;width:53px"></div>
<div class="rt" style="left:1007.6px;top:442.64px;width:49.4px;font-size:10.7px">Start</div>
<div class="rl" style="left:1064px;top:468px;width:50px"></div>
<div class="rt" style="left:1067.6px;top:442.64px;width:46.4px;font-size:10.7px">00060</div>
<div class="rl" style="left:1121px;top:468px;width:145px"></div>
<div class="rt" style="left:1124.6px;top:442.64px;width:141.4px;font-size:10.7px">/ETL/CL_MAP_DR_GET_FIELD</div>
<div class="rl" style="left:7px;top:498px;width:445px"></div>
<div class="rt" style="left:10.4px;top:473.09px;width:441.4px;font-size:10.7px">/ETL/APDSUSA_0070 <span style="font-size:11.2px;margin-left:0.9px">Extract the Accounts included from the header rows</span></div>
<div class="rl" style="left:459px;top:498px;width:78px"></div>
<div class="rt" style="left:462.6px;top:473.09px;width:74.4px;font-size:10.7px">DATEV online</div>
<div class="rl" style="left:544px;top:498px;width:41px"></div>
<div class="rt" style="left:547.6px;top:473.09px;width:37.4px;font-size:10.7px">Entry</div>
<div class="rl" style="left:592px;top:498px;width:45px"></div>
<div class="rt" style="left:595.6px;top:473.09px;width:41.4px;font-size:10.7px">active</div>
<div class="rl" style="left:644px;top:498px;width:68px"></div>
<div class="rt" style="left:647.6px;top:473.09px;width:64.4px;font-size:10.7px">01.01.1000</div>
<div class="rl" style="left:719px;top:498px;width:68px"></div>
<div class="rt" style="left:722.6px;top:473.09px;width:64.4px;font-size:10.7px">31.12.9999</div>
<div class="rl" style="left:794px;top:498px;width:89px"></div>
<div class="rt" style="left:797.6px;top:473.09px;width:85.4px;font-size:10.7px">/ETL/APDSUSA</div>
<div class="rl" style="left:890px;top:498px;width:107px"></div>
<div class="rt" style="left:893.6px;top:473.09px;width:103.4px;font-size:10.7px">/ETL/IS_DSUSA_IN</div>
<div class="rl" style="left:1004px;top:498px;width:53px"></div>
<div class="rt" style="left:1007.6px;top:473.09px;width:49.4px;font-size:10.7px">Start</div>
<div class="rl" style="left:1064px;top:498px;width:50px"></div>
<div class="rt" style="left:1067.6px;top:473.09px;width:46.4px;font-size:10.7px">00070</div>
<div class="rl" style="left:1121px;top:498px;width:145px"></div>
<div class="rt" style="left:1124.6px;top:473.09px;width:141.4px;font-size:10.7px">/ETL/CL_MAP_DR_GET_FIELD</div>
<div class="rl" style="left:7px;top:528px;width:445px"></div>
<div class="rt" style="left:10.4px;top:503.54px;width:441.4px;font-size:10.7px">/ETL/APDSUSA_0080 <span style="font-size:11.2px;margin-left:0.9px">Extract the Fiscal Year from the header rows (Text)</span></div>
<div class="rl" style="left:459px;top:528px;width:78px"></div>
<div class="rt" style="left:462.6px;top:503.54px;width:74.4px;font-size:10.7px">DATEV online</div>
<div class="rl" style="left:544px;top:528px;width:41px"></div>
<div class="rt" style="left:547.6px;top:503.54px;width:37.4px;font-size:10.7px">Entry</div>
<div class="rl" style="left:592px;top:528px;width:45px"></div>
<div class="rt" style="left:595.6px;top:503.54px;width:41.4px;font-size:10.7px">active</div>
<div class="rl" style="left:644px;top:528px;width:68px"></div>
<div class="rt" style="left:647.6px;top:503.54px;width:64.4px;font-size:10.7px">01.01.1000</div>
<div class="rl" style="left:719px;top:528px;width:68px"></div>
<div class="rt" style="left:722.6px;top:503.54px;width:64.4px;font-size:10.7px">31.12.9999</div>
<div class="rl" style="left:794px;top:528px;width:89px"></div>
<div class="rt" style="left:797.6px;top:503.54px;width:85.4px;font-size:10.7px">/ETL/APDSUSA</div>
<div class="rl" style="left:890px;top:528px;width:107px"></div>
<div class="rt" style="left:893.6px;top:503.54px;width:103.4px;font-size:10.7px">/ETL/IS_DSUSA_IN</div>
<div class="rl" style="left:1004px;top:528px;width:53px"></div>
<div class="rt" style="left:1007.6px;top:503.54px;width:49.4px;font-size:10.7px">Start</div>
<div class="rl" style="left:1064px;top:528px;width:50px"></div>
<div class="rt" style="left:1067.6px;top:503.54px;width:46.4px;font-size:10.7px">00080</div>
<div class="rl" style="left:1121px;top:528px;width:145px"></div>
<div class="rt" style="left:1124.6px;top:503.54px;width:141.4px;font-size:10.7px">/ETL/CL_MAP_DR_GET_FIELD</div>
<div class="rl" style="left:7px;top:559px;width:445px"></div>
<div class="rt" style="left:10.4px;top:533.99px;width:441.4px;font-size:10.7px">/ETL/APDSUSA_0090 <span style="font-size:11.2px;margin-left:0.9px">Extract the Fiscal Period from the header rows (Text)</span></div>
<div class="rl" style="left:459px;top:559px;width:78px"></div>
<div class="rt" style="left:462.6px;top:533.99px;width:74.4px;font-size:10.7px">DATEV online</div>
<div class="rl" style="left:544px;top:559px;width:41px"></div>
<div class="rt" style="left:547.6px;top:533.99px;width:37.4px;font-size:10.7px">Entry</div>
<div class="rl" style="left:592px;top:559px;width:45px"></div>
<div class="rt" style="left:595.6px;top:533.99px;width:41.4px;font-size:10.7px">active</div>
<div class="rl" style="left:644px;top:559px;width:68px"></div>
<div class="rt" style="left:647.6px;top:533.99px;width:64.4px;font-size:10.7px">01.01.1000</div>
<div class="rl" style="left:719px;top:559px;width:68px"></div>
<div class="rt" style="left:722.6px;top:533.99px;width:64.4px;font-size:10.7px">31.12.9999</div>
<div class="rl" style="left:794px;top:559px;width:89px"></div>
<div class="rt" style="left:797.6px;top:533.99px;width:85.4px;font-size:10.7px">/ETL/APDSUSA</div>
<div class="rl" style="left:890px;top:559px;width:107px"></div>
<div class="rt" style="left:893.6px;top:533.99px;width:103.4px;font-size:10.7px">/ETL/IS_DSUSA_IN</div>
<div class="rl" style="left:1004px;top:559px;width:53px"></div>
<div class="rt" style="left:1007.6px;top:533.99px;width:49.4px;font-size:10.7px">Start</div>
<div class="rl" style="left:1064px;top:559px;width:50px"></div>
<div class="rt" style="left:1067.6px;top:533.99px;width:46.4px;font-size:10.7px">00090</div>
<div class="rl" style="left:1121px;top:559px;width:145px"></div>
<div class="rt" style="left:1124.6px;top:533.99px;width:141.4px;font-size:10.7px">/ETL/CL_MAP_DR_GET_FIELD</div>
<div class="rl" style="left:7px;top:589px;width:445px"></div>
<div class="rt" style="left:10.4px;top:564.44px;width:441.4px;font-size:10.7px">/ETL/APDSUSA_0100 <span style="font-size:11.2px;margin-left:0.9px">Extract the Currency from the header rows</span></div>
<div class="rl" style="left:459px;top:589px;width:78px"></div>
<div class="rt" style="left:462.6px;top:564.44px;width:74.4px;font-size:10.7px">DATEV online</div>
<div class="rl" style="left:544px;top:589px;width:41px"></div>
<div class="rt" style="left:547.6px;top:564.44px;width:37.4px;font-size:10.7px">Entry</div>
<div class="rl" style="left:592px;top:589px;width:45px"></div>
<div class="rt" style="left:595.6px;top:564.44px;width:41.4px;font-size:10.7px">active</div>
<div class="rl" style="left:644px;top:589px;width:68px"></div>
<div class="rt" style="left:647.6px;top:564.44px;width:64.4px;font-size:10.7px">01.01.1000</div>
<div class="rl" style="left:719px;top:589px;width:68px"></div>
<div class="rt" style="left:722.6px;top:564.44px;width:64.4px;font-size:10.7px">31.12.9999</div>
<div class="rl" style="left:794px;top:589px;width:89px"></div>
<div class="rt" style="left:797.6px;top:564.44px;width:85.4px;font-size:10.7px">/ETL/APDSUSA</div>
<div class="rl" style="left:890px;top:589px;width:107px"></div>
<div class="rt" style="left:893.6px;top:564.44px;width:103.4px;font-size:10.7px">/ETL/IS_DSUSA_IN</div>
<div class="rl" style="left:1004px;top:589px;width:53px"></div>
<div class="rt" style="left:1007.6px;top:564.44px;width:49.4px;font-size:10.7px">Start</div>
<div class="rl" style="left:1064px;top:589px;width:50px"></div>
<div class="rt" style="left:1067.6px;top:564.44px;width:46.4px;font-size:10.7px">00100</div>
<div class="rl" style="left:1121px;top:589px;width:145px"></div>
<div class="rt" style="left:1124.6px;top:564.44px;width:141.4px;font-size:10.7px">/ETL/CL_MAP_DR_GET_FIELD</div>
<div class="rl" style="left:7px;top:620px;width:445px"></div>
<div class="rt" style="left:10.4px;top:594.89px;width:441.4px;font-size:10.7px">/ETL/APDSUSA_0110 <span style="font-size:11.2px;margin-left:0.9px">Extract the Null balances flag from the header rows (Text)</span></div>
<div class="rl" style="left:459px;top:620px;width:78px"></div>
<div class="rt" style="left:462.6px;top:594.89px;width:74.4px;font-size:10.7px">DATEV online</div>
<div class="rl" style="left:544px;top:620px;width:41px"></div>
<div class="rt" style="left:547.6px;top:594.89px;width:37.4px;font-size:10.7px">Entry</div>
<div class="rl" style="left:592px;top:620px;width:45px"></div>
<div class="rt" style="left:595.6px;top:594.89px;width:41.4px;font-size:10.7px">active</div>
<div class="rl" style="left:644px;top:620px;width:68px"></div>
<div class="rt" style="left:647.6px;top:594.89px;width:64.4px;font-size:10.7px">01.01.1000</div>
<div class="rl" style="left:719px;top:620px;width:68px"></div>
<div class="rt" style="left:722.6px;top:594.89px;width:64.4px;font-size:10.7px">31.12.9999</div>
<div class="rl" style="left:794px;top:620px;width:89px"></div>
<div class="rt" style="left:797.6px;top:594.89px;width:85.4px;font-size:10.7px">/ETL/APDSUSA</div>
<div class="rl" style="left:890px;top:620px;width:107px"></div>
<div class="rt" style="left:893.6px;top:594.89px;width:103.4px;font-size:10.7px">/ETL/IS_DSUSA_IN</div>
<div class="rl" style="left:1004px;top:620px;width:53px"></div>
<div class="rt" style="left:1007.6px;top:594.89px;width:49.4px;font-size:10.7px">Start</div>
<div class="rl" style="left:1064px;top:620px;width:50px"></div>
<div class="rt" style="left:1067.6px;top:594.89px;width:46.4px;font-size:10.7px">00110</div>
<div class="rl" style="left:1121px;top:620px;width:145px"></div>
<div class="rt" style="left:1124.6px;top:594.89px;width:141.4px;font-size:10.7px">/ETL/CL_MAP_DR_GET_FIELD</div>
<div class="rl" style="left:7px;top:650px;width:445px"></div>
<div class="rt" style="left:10.4px;top:625.34px;width:441.4px;font-size:10.7px">/ETL/APDSUSA_0120 <span style="font-size:11.2px;margin-left:0.9px">Write the Client Name in all rows (Constant Field)</span></div>
<div class="rl" style="left:459px;top:650px;width:78px"></div>
<div class="rt" style="left:462.6px;top:625.34px;width:74.4px;font-size:10.7px">DATEV online</div>
<div class="rl" style="left:544px;top:650px;width:41px"></div>
<div class="rt" style="left:547.6px;top:625.34px;width:37.4px;font-size:10.7px">Entry</div>
<div class="rl" style="left:592px;top:650px;width:45px"></div>
<div class="rt" style="left:595.6px;top:625.34px;width:41.4px;font-size:10.7px">active</div>
<div class="rl" style="left:644px;top:650px;width:68px"></div>
<div class="rt" style="left:647.6px;top:625.34px;width:64.4px;font-size:10.7px">01.01.1000</div>
<div class="rl" style="left:719px;top:650px;width:68px"></div>
<div class="rt" style="left:722.6px;top:625.34px;width:64.4px;font-size:10.7px">31.12.9999</div>
<div class="rl" style="left:794px;top:650px;width:89px"></div>
<div class="rt" style="left:797.6px;top:625.34px;width:85.4px;font-size:10.7px">/ETL/APDSUSA</div>
<div class="rl" style="left:890px;top:650px;width:107px"></div>
<div class="rt" style="left:893.6px;top:625.34px;width:103.4px;font-size:10.7px">/ETL/IS_DSUSA_IN</div>
<div class="rl" style="left:1004px;top:650px;width:53px"></div>
<div class="rt" style="left:1007.6px;top:625.34px;width:49.4px;font-size:10.7px">Start</div>
<div class="rl" style="left:1064px;top:650px;width:50px"></div>
<div class="rt" style="left:1067.6px;top:625.34px;width:46.4px;font-size:10.7px">00120</div>
<div class="rl" style="left:1121px;top:650px;width:145px"></div>
<div class="rt" style="left:1124.6px;top:625.34px;width:141.4px;font-size:10.7px">/ETL/CL_CALC_DP_SET_FIRST</div>
<div class="rl" style="left:7px;top:681px;width:445px"></div>
<div class="rt" style="left:10.4px;top:655.79px;width:441.4px;font-size:10.7px">/ETL/APDSUSA_0130 <span style="font-size:11.2px;margin-left:0.9px">Write the Tax Consultant Number in all rows (Constant Field)</span></div>
<div class="rl" style="left:459px;top:681px;width:78px"></div>
<div class="rt" style="left:462.6px;top:655.79px;width:74.4px;font-size:10.7px">DATEV online</div>
<div class="rl" style="left:544px;top:681px;width:41px"></div>
<div class="rt" style="left:547.6px;top:655.79px;width:37.4px;font-size:10.7px">Entry</div>
<div class="rl" style="left:592px;top:681px;width:45px"></div>
<div class="rt" style="left:595.6px;top:655.79px;width:41.4px;font-size:10.7px">active</div>
<div class="rl" style="left:644px;top:681px;width:68px"></div>
<div class="rt" style="left:647.6px;top:655.79px;width:64.4px;font-size:10.7px">01.01.1000</div>
<div class="rl" style="left:719px;top:681px;width:68px"></div>
<div class="rt" style="left:722.6px;top:655.79px;width:64.4px;font-size:10.7px">31.12.9999</div>
<div class="rl" style="left:794px;top:681px;width:89px"></div>
<div class="rt" style="left:797.6px;top:655.79px;width:85.4px;font-size:10.7px">/ETL/APDSUSA</div>
<div class="rl" style="left:890px;top:681px;width:107px"></div>
<div class="rt" style="left:893.6px;top:655.79px;width:103.4px;font-size:10.7px">/ETL/IS_DSUSA_IN</div>
<div class="rl" style="left:1004px;top:681px;width:53px"></div>
<div class="rt" style="left:1007.6px;top:655.79px;width:49.4px;font-size:10.7px">Start</div>
<div class="rl" style="left:1064px;top:681px;width:50px"></div>
<div class="rt" style="left:1067.6px;top:655.79px;width:46.4px;font-size:10.7px">00130</div>
<div class="rl" style="left:1121px;top:681px;width:145px"></div>
<div class="rt" style="left:1124.6px;top:655.79px;width:141.4px;font-size:10.7px">/ETL/CL_CALC_DP_SET_FIRST</div>
<div class="rl" style="left:7px;top:711px;width:445px"></div>
<div class="rt" style="left:10.4px;top:686.24px;width:441.4px;font-size:10.7px">/ETL/APDSUSA_0140 <span style="font-size:11.2px;margin-left:0.9px">Write the Client Number in all rows (Constant Field)</span></div>
<div class="rl" style="left:459px;top:711px;width:78px"></div>
<div class="rt" style="left:462.6px;top:686.24px;width:74.4px;font-size:10.7px">DATEV online</div>
<div class="rl" style="left:544px;top:711px;width:41px"></div>
<div class="rt" style="left:547.6px;top:686.24px;width:37.4px;font-size:10.7px">Entry</div>
<div class="rl" style="left:592px;top:711px;width:45px"></div>
<div class="rt" style="left:595.6px;top:686.24px;width:41.4px;font-size:10.7px">active</div>
<div class="rl" style="left:644px;top:711px;width:68px"></div>
<div class="rt" style="left:647.6px;top:686.24px;width:64.4px;font-size:10.7px">01.01.1000</div>
<div class="rl" style="left:719px;top:711px;width:68px"></div>
<div class="rt" style="left:722.6px;top:686.24px;width:64.4px;font-size:10.7px">31.12.9999</div>
<div class="rl" style="left:794px;top:711px;width:89px"></div>
<div class="rt" style="left:797.6px;top:686.24px;width:85.4px;font-size:10.7px">/ETL/APDSUSA</div>
<div class="rl" style="left:890px;top:711px;width:107px"></div>
<div class="rt" style="left:893.6px;top:686.24px;width:103.4px;font-size:10.7px">/ETL/IS_DSUSA_IN</div>
<div class="rl" style="left:1004px;top:711px;width:53px"></div>
<div class="rt" style="left:1007.6px;top:686.24px;width:49.4px;font-size:10.7px">Start</div>
<div class="rl" style="left:1064px;top:711px;width:50px"></div>
<div class="rt" style="left:1067.6px;top:686.24px;width:46.4px;font-size:10.7px">00140</div>
<div class="rl" style="left:1121px;top:711px;width:145px"></div>
<div class="rt" style="left:1124.6px;top:686.24px;width:141.4px;font-size:10.7px">/ETL/CL_CALC_DP_SET_FIRST</div>

<!-- selected cell -->
<div class="a" style="left:3.4px;top:285.7px;width:451.6px;height:30.2px;border:1.5px solid #5b7da6;border-radius:1px"></div>
<div class="a" style="left:450.4px;top:311.1px;width:5.6px;height:5.6px;border-radius:50%;background:#3e5f8a"></div>

<!-- tooltip -->
<div class="a" style="left:582.2px;top:228.6px;width:218.8px;height:29px;background:#e3e6eb;border-radius:3px;box-shadow:0 1px 3px rgba(0,0,0,0.18)"></div>
<div class="t" style="left:587.8px;top:232.4px;font-size:10px;color:#383838;letter-spacing:0.1px">Opens the Task assigned to the selected ETL</div>
<div class="t" style="left:587.8px;top:244.1px;font-size:10px;color:#383838;letter-spacing:0.1px">Step in a new Browser Tab</div>

<!-- scrollbar + more button -->
<div class="a" style="left:1266.2px;top:225px;width:9.8px;height:94.2px;background:#b2b2b2"></div>
<div class="a" style="left:1276px;top:118px;width:4px;height:602px;background:#fff"></div>
<div class="a" style="left:1230px;top:225.4px;width:35.4px;height:35.2px;border-radius:50%;background:#f6f6f6;border:1px solid #cfcfcf;box-shadow:0 2px 5px rgba(0,0,0,0.2)"></div>
<svg style="left:0;top:0" width="1280" height="720">
 <g fill="none" stroke="#4a6d97" stroke-width="1.2">
  <circle cx="1242.5" cy="243.1" r="1.35"/>
  <circle cx="1247.8" cy="243.1" r="1.35"/>
  <circle cx="1253.1" cy="243.1" r="1.35"/>
 </g>
</svg>
</body></html>
